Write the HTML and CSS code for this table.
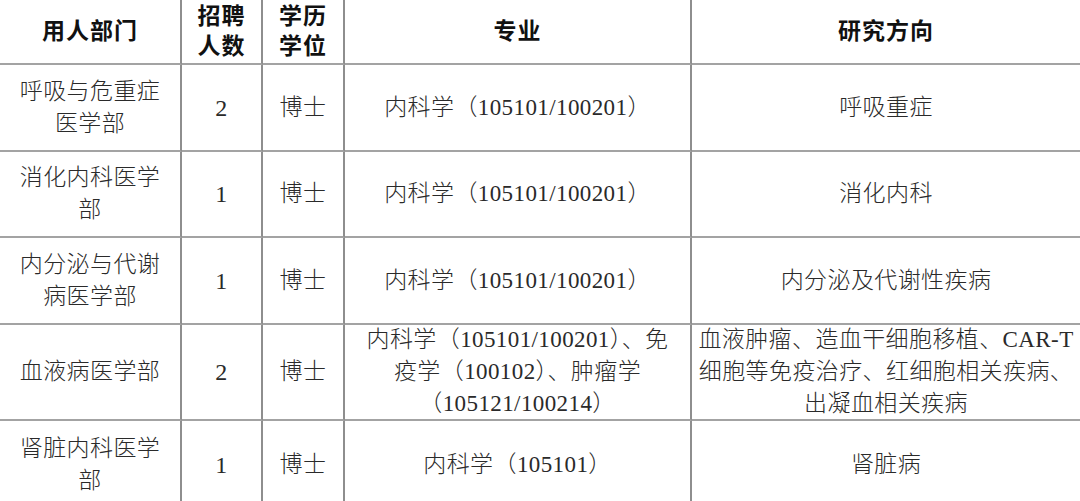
FILE: index.html
```html
<!DOCTYPE html>
<html lang="zh">
<head>
<meta charset="utf-8">
<title>招聘岗位</title>
<link rel="stylesheet" href="styles.css">
</head>
<body>
<div class="table">
  <div class="cell head">用人部门</div>
  <div class="cell head">招聘<br>人数</div>
  <div class="cell head">学历<br>学位</div>
  <div class="cell head">专业</div>
  <div class="cell head last">研究方向</div>

  <div class="cell">呼吸与危重症<br>医学部</div>
  <div class="cell num">2</div>
  <div class="cell">博士</div>
  <div class="cell">内科学（105101/100201）</div>
  <div class="cell last">呼吸重症</div>

  <div class="cell">消化内科医学<br>部</div>
  <div class="cell num">1</div>
  <div class="cell">博士</div>
  <div class="cell">内科学（105101/100201）</div>
  <div class="cell last">消化内科</div>

  <div class="cell">内分泌与代谢<br>病医学部</div>
  <div class="cell num">1</div>
  <div class="cell">博士</div>
  <div class="cell">内科学（105101/100201）</div>
  <div class="cell last">内分泌及代谢性疾病</div>

  <div class="cell">血液病医学部</div>
  <div class="cell num">2</div>
  <div class="cell">博士</div>
  <div class="cell">内科学（105101/100201）、免<br>疫学（100102）、肿瘤学<br>（105121/100214）</div>
  <div class="cell last">血液肿瘤、造血干细胞移植、CAR-T<br>细胞等免疫治疗、红细胞相关疾病、<br>出凝血相关疾病</div>

  <div class="cell">肾脏内科医学<br>部</div>
  <div class="cell num">1</div>
  <div class="cell">博士</div>
  <div class="cell">内科学（105101）</div>
  <div class="cell last">肾脏病</div>
</div>
</body>
</html>
```

FILE: styles.css
```css
html, body {
  margin: 0;
  padding: 0;
  background: #ffffff;
}

body {
  width: 1080px;
  height: 501px;
  overflow: hidden;
  font-family: "Liberation Serif", "Noto Sans CJK SC", serif;
}

.table {
  display: grid;
  grid-template-columns: 182px 81px 82px 347px 388px;
  grid-template-rows: 65px 87px 86px 87px 96px 90px;
}

.cell {
  box-sizing: border-box;
  display: flex;
  align-items: center;
  justify-content: center;
  text-align: center;
  border-bottom: 2px solid #a3a3a3;
  border-right: 2px solid #8e8e8e;
  font-size: 23px;
  line-height: 32px;
  letter-spacing: 0.4px;
  color: #2a2a2a;
  font-weight: 300;
  padding: 0 4px;
}

.cell.last {
  border-right: none;
}

.head {
  font-weight: 700;
  color: #111111;
  line-height: 30px;
  letter-spacing: 1px;
}

.num {
  font-size: 24px;
}
```
